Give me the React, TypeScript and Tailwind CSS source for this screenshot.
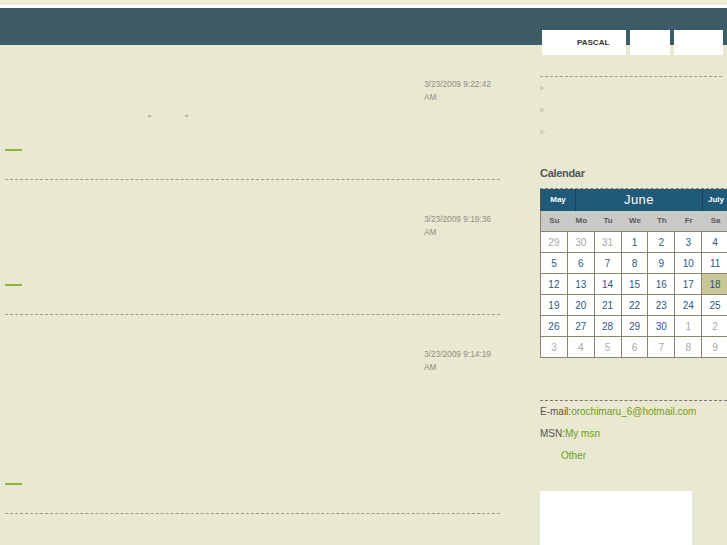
import React from 'react'

const weeks = [
  [29, 30, 31, 1, 2, 3, 4],
  [5, 6, 7, 8, 9, 10, 11],
  [12, 13, 14, 15, 16, 17, 18],
  [19, 20, 21, 22, 23, 24, 25],
  [26, 27, 28, 29, 30, 1, 2],
  [3, 4, 5, 6, 7, 8, 9],
]

function Entry({ date, bodyHeight, quote }: { date: string; bodyHeight: string; quote?: boolean }) {
  return (
    <div className="pt-[33px] border-b border-dashed border-[#9c9b84]">
      <div className="flex">
        <div className="flex-1" />
        <div className="w-[76px] text-[8.3px] leading-[13px] text-[#8f8f85]">{date}</div>
      </div>
      <div className={bodyHeight}>
        {quote && (
          <div className="pt-[9px] pl-[143px] text-[9px] leading-[10px] text-[#777] flex gap-[34px]">
            <span>“</span>
            <span>”</span>
          </div>
        )}
      </div>
      <div className="h-[2px] w-[17px] bg-[#8fb33a]" />
      <div className="h-[28px]" />
    </div>
  )
}

function Calendar() {
  return (
    <div className="mt-[8px] border-t border-dashed border-[#8a8470] w-[189px]">
      <div className="flex h-[22px] bg-[#1f5a78] text-white border-l border-[#555]">
        <div className="w-[35px] border-r border-[#173f55] flex items-center justify-center text-[8px] font-bold">May</div>
        <div className="flex-1 flex items-center justify-center text-[13px] tracking-[0.5px]">June</div>
        <div className="w-[27px] border-l border-[#173f55] flex items-center justify-center text-[8px] font-bold">July</div>
      </div>
      <div className="grid grid-cols-7 h-[20px] bg-[#c9c9c5] border-l border-[#8a8470] text-[8px] font-bold text-[#5a5a5a]">
        {['Su', 'Mo', 'Tu', 'We', 'Th', 'Fr', 'Sa'].map((d) => (
          <div key={d} className="flex items-center justify-center">{d}</div>
        ))}
      </div>
      <div className="border-l border-t border-[#8a8470]">
        {weeks.map((w, i) => (
          <div key={i} className="grid grid-cols-7">
            {w.map((d, j) => {
              const other = (i === 0 && d > 20) || (i >= 4 && d < 15)
              const today = i === 2 && j === 6
              return (
                <div
                  key={j}
                  className={
                    'h-[21px] border-r border-b border-[#8a8470] flex items-center justify-center text-[10px] ' +
                    (today ? 'bg-[#c9c796] ' : 'bg-white ') +
                    (other ? 'text-[#a8a8a8]' : 'text-[#2a5a82]')
                  }
                >
                  {d}
                </div>
              )
            })}
          </div>
        ))}
      </div>
    </div>
  )
}

export default function App() {
  return (
    <div className="w-[727px] h-[545px] overflow-hidden bg-[#e9e8d0] font-['Liberation_Sans',Arial,sans-serif]">
      <div className="h-[5px] bg-[#ecebd6]" />
      <div className="h-[3px] bg-white" />
      <div className="h-[37px] bg-[#3d5c67] flex justify-end items-start pr-[4px]">
        <div className="mt-[22px] flex gap-[4px]">
          <div className="w-[84px] h-[25px] bg-white flex items-center pl-[35px] text-[8px] font-bold text-[#333]">PASCAL</div>
          <div className="w-[40px] h-[25px] bg-white" />
          <div className="w-[49px] h-[25px] bg-white" />
        </div>
      </div>
      <div className="flex">
        <div className="ml-[5px] w-[495px]">
          <Entry date="3/23/2009 9:22:42 AM" bodyHeight="h-[45px]" quote />
          <Entry date="3/23/2009 9:19:36 AM" bodyHeight="h-[45px]" />
          <Entry date="3/23/2009 9:14:19 AM" bodyHeight="h-[109px]" />
        </div>
        <div className="ml-[40px] w-[187px] shrink-0">
          <div className="mt-[31px] border-t border-dashed border-[#9c9b84] w-[182px]" />
          <ul className="text-[7px] text-[#cfcebb] leading-[22px]">
            <li>▶</li>
            <li>▶</li>
            <li>▶</li>
          </ul>
          <div className="mt-[23px] text-[11px] font-bold text-[#555] leading-[14px] tracking-[-0.3px]">Calendar</div>
          <Calendar />
          <div className="mt-[42px] border-t border-dashed border-[#777] w-[187px]" />
          <div className="text-[10px] leading-[22px] text-[#555]">
            <div>E-mail:<span className="text-[#6e9c1e]">orochimaru_6@hotmail.com</span></div>
            <div>MSN:<span className="text-[#6e9c1e]">My msn</span></div>
            <div className="pl-[21px] text-[#6e9c1e]">Other</div>
          </div>
          <div className="mt-[24px] w-[152px] h-[60px] bg-white" />
        </div>
      </div>
    </div>
  )
}
